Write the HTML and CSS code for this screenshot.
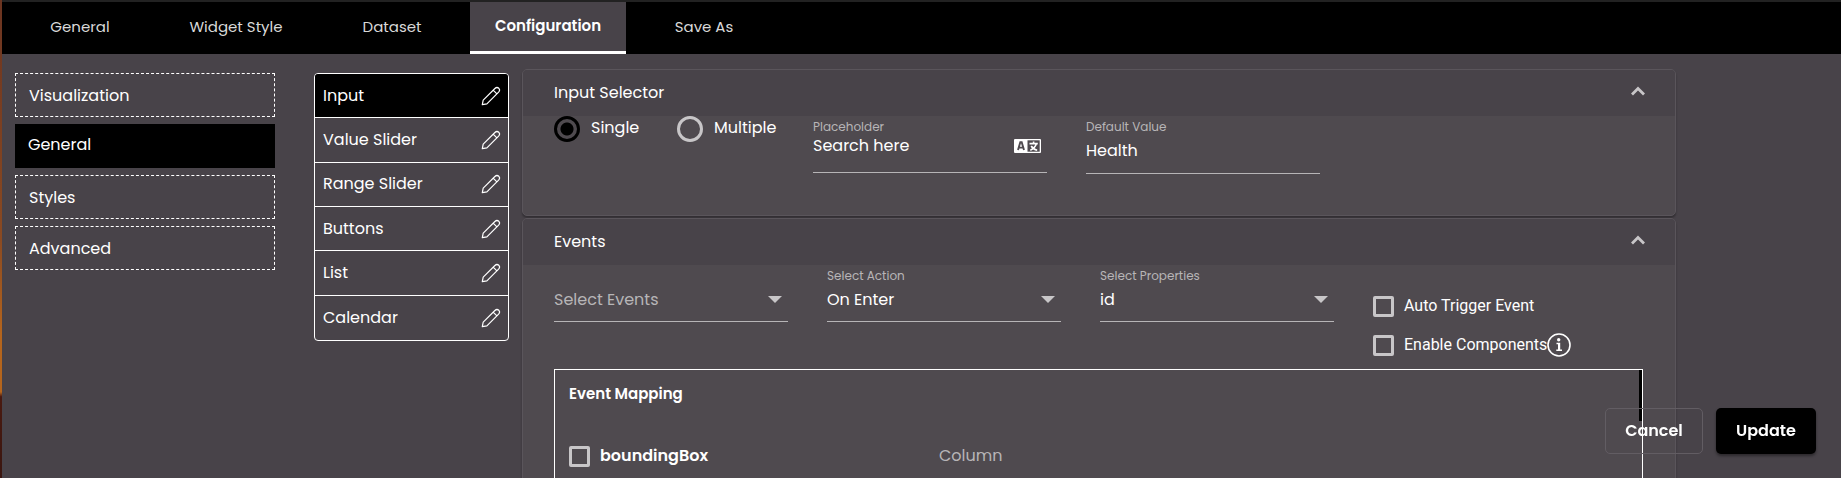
FILE: index.html
```
<!DOCTYPE html>
<html lang="en">
<head>
    <meta charset="UTF-8">
    <meta name="viewport" content="width=device-width, initial-scale=1.0">
    <title>Widget Configuration</title>
    <link rel="stylesheet" href="styles.css">
</head>
<body>
    <svg class="sprite" aria-hidden="true">
        <symbol id="pencil" viewBox="0 0 20 20">
            <path d="M1.3 18.7 2.2 14.2 13.9 2.5Q15.9.6 17.8 2.3 19.5 4.2 17.6 6.2L5.9 17.9ZM12.2 4.2 15.9 7.9" fill="none" stroke="currentColor" stroke-width="1.2" stroke-linejoin="round"/>
        </symbol>
        <symbol id="chevron" viewBox="0 0 16 10">
            <path d="M2 8.5 8 2.5 14 8.5" fill="none" stroke="currentColor" stroke-width="2.8"/>
        </symbol>
    </svg>

    <div class="window">
        <nav class="tabs">
            <a class="tab" href="#">General</a>
            <a class="tab" href="#">Widget Style</a>
            <a class="tab" href="#">Dataset</a>
            <a class="tab active" href="#">Configuration</a>
            <a class="tab" href="#">Save As</a>
        </nav>

        <div class="content">
            <div class="sections">
                <button type="button">Visualization</button>
                <button type="button" class="active">General</button>
                <button type="button">Styles</button>
                <button type="button">Advanced</button>
            </div>

            <div class="components">
                <button type="button" class="active">Input <svg><use href="#pencil"/></svg></button>
                <button type="button">Value Slider <svg><use href="#pencil"/></svg></button>
                <button type="button">Range Slider <svg><use href="#pencil"/></svg></button>
                <button type="button">Buttons <svg><use href="#pencil"/></svg></button>
                <button type="button">List <svg><use href="#pencil"/></svg></button>
                <button type="button">Calendar <svg><use href="#pencil"/></svg></button>
            </div>

            <main class="panels">
                <section class="panel">
                    <button type="button" class="panel-header">Input Selector <svg><use href="#chevron"/></svg></button>
                    <div class="panel-body selector-body">
                        <div class="radio-group">
                            <label class="radio"><input type="radio" name="mode" checked> Single</label>
                            <label class="radio"><input type="radio" name="mode"> Multiple</label>
                        </div>
                        <div class="field">
                            <label for="placeholder">Placeholder</label>
                            <div class="control with-icon">
                                <input type="text" id="placeholder" value="Search here">
                                <svg class="translate" viewBox="0 0 27 14">
                                    <rect width="27" height="14" rx="1" fill="#fff"/>
                                    <path d="M4 11 6.3 3.2H7.7L10 11M5 8.6H9" fill="none" stroke="#4f4a4f" stroke-width="1.9"/>
                                    <rect x="13.5" y="1.3" width="12.2" height="11.4" fill="#4f4a4f"/>
                                    <path d="M15.5 4.6H23.8M19.6 2.4V4.6M22.4 4.8Q20.8 9.4 16.3 11.2M17.2 7Q19.2 10.4 23.2 11.3" fill="none" stroke="#fff" stroke-width="1.6"/>
                                </svg>
                            </div>
                        </div>
                        <div class="field">
                            <label for="defaultValue">Default Value</label>
                            <div class="control roomy">
                                <input type="text" id="defaultValue" value="Health">
                            </div>
                        </div>
                    </div>
                </section>

                <section class="panel">
                    <button type="button" class="panel-header">Events <svg><use href="#chevron"/></svg></button>
                    <div class="panel-body">
                        <div class="events-row">
                            <div class="field">
                                <div class="control select muted">
                                    <select aria-label="Select Events"><option>Select Events</option></select>
                                </div>
                            </div>
                            <div class="field">
                                <label for="action">Select Action</label>
                                <div class="control select">
                                    <select id="action"><option>On Enter</option></select>
                                </div>
                            </div>
                            <div class="field">
                                <label for="properties">Select Properties</label>
                                <div class="control select">
                                    <select id="properties"><option>id</option></select>
                                </div>
                            </div>
                            <div class="checks">
                                <label class="check"><input type="checkbox"> Auto Trigger Event</label>
                                <div class="check-line">
                                    <label class="check"><input type="checkbox"> Enable Components</label>
                                    <svg class="info" viewBox="0 0 24 24">
                                        <circle cx="12" cy="12" r="11" fill="none" stroke="#fff" stroke-width="1.6"/>
                                        <circle cx="11.7" cy="6.7" r="1.7" fill="#fff"/>
                                        <path d="M9.5 9.8H13.2V16.6H15V18H9.3V16.6H11V11.2H9.5Z" fill="#fff"/>
                                    </svg>
                                </div>
                            </div>
                        </div>

                        <div class="mapping">
                            <h2>Event Mapping</h2>
                            <div class="mapping-row">
                                <label class="check strong"><input type="checkbox"> boundingBox</label>
                                <span class="column">Column</span>
                            </div>
                            <div class="scroll-thumb"></div>
                        </div>
                    </div>
                </section>
            </main>
        </div>

        <div class="actions">
            <button type="button" class="cancel">Cancel</button>
            <button type="button" class="update">Update</button>
        </div>
    </div>
</body>
</html>
```
FILE: styles.css
```
* {
    box-sizing: border-box;
}

body {
    margin: 0;
    padding-left: 2px;
    height: 100vh;
    overflow: hidden;
    background: linear-gradient(#6b3420 0%, #8a4a22 50%, #b5651d 70%, #b5651d 82%, #4a1a10 83%, #3a1610 100%);
    color: #fff;
    font-family: Poppins, Inter, sans-serif;
    font-size: 16px;
    line-height: 24px;
}

button, input, select {
    font: inherit;
    color: inherit;
}

button {
    background: none;
    border: none;
    padding: 0;
    text-align: left;
    cursor: pointer;
}

.sprite {
    display: none;
}

.window {
    height: 100%;
    overflow: hidden;
    background-color: #484349;
    border-top: 2px solid #222;
}

/* top tabs */
.tabs {
    display: flex;
    height: 52px;
    background-color: #000;
}

.tab {
    display: flex;
    align-items: center;
    justify-content: center;
    width: 156px;
    padding-bottom: 3px;
    color: #d9d9d9;
    font-size: 15px;
    text-decoration: none;
}

.tab.active {
    padding-bottom: 2px;
    background-color: #484349;
    border-bottom: 3px solid #fff;
    color: #fff;
    font-weight: 600;
}

.content {
    display: flex;
    align-items: flex-start;
    padding: 15px 165px 0 13px;
}

/* left column */
.sections {
    display: flex;
    flex-direction: column;
    flex: none;
    gap: 7px;
    width: 260px;
    margin: 4px 39px 0 0;
}

.sections button {
    height: 44px;
    padding: 1px 13px 0;
    border: 1px dashed #fff;
}

.sections .active {
    padding: 0 13px 2px;
    background-color: #000;
    border: none;
}

.components {
    display: grid;
    grid-auto-rows: 1fr;
    flex: none;
    width: 195px;
    height: 268px;
    margin: 4px 13px 0 0;
    border: 1px solid #fff;
    border-radius: 4px;
    overflow: hidden;
}

.components button {
    display: flex;
    align-items: center;
    justify-content: space-between;
    padding: 0 7px 0 8px;
    border-bottom: 1px solid #fff;
}

.components button:last-child {
    border-bottom: none;
}

.components .active {
    background-color: #000;
}

.components svg {
    width: 20px;
    height: 20px;
}

/* accordion panels */
.panels {
    display: flex;
    flex-direction: column;
    flex: 1;
    gap: 2px;
}

.panel {
    border: 1px solid #5a555b;
    border-radius: 5px;
    background-color: #4f4a4f;
    box-shadow: 0 2px 2px rgba(0, 0, 0, 0.3);
    overflow: hidden;
}

.panel-header {
    display: flex;
    align-items: center;
    justify-content: space-between;
    width: 100%;
    height: 46px;
    padding: 0 29px 0 31px;
    background-color: #484349;
}

.panel-header svg {
    width: 16px;
    height: 10px;
    margin-bottom: 4px;
    color: #c8c6c8;
}

.panel-body {
    padding: 0 32px 0 31px;
}

.selector-body {
    display: flex;
    gap: 39px;
    height: 99px;
}

.radio-group {
    display: flex;
    align-items: flex-start;
    width: 220px;
}

.radio {
    display: flex;
    align-items: flex-start;
    gap: 11px;
    width: 123px;
    flex: none;
}

.radio input {
    appearance: none;
    width: 26px;
    height: 26px;
    margin: 0;
    border: 3px solid #c8c6c8;
    border-radius: 50%;
}

.radio input:checked {
    border-color: #000;
    background: radial-gradient(circle, #000 6px, transparent 7px);
}

.field {
    display: flex;
    flex-direction: column;
    width: 234px;
}

.field label {
    height: 20px;
    color: #b7b5b7;
    font-size: 12px;
    line-height: 20px;
}

.control {
    display: flex;
    align-items: center;
    height: 39px;
    border-bottom: 1px solid #b7b5b7;
}

.control input,
.control select {
    flex: 1;
    min-width: 0;
    width: 100%;
    height: 24px;
    padding: 0;
    border: none;
    outline: none;
    background: none;
    appearance: none;
}

.selector-body .field {
    padding-top: 1px;
}

.with-icon {
    height: 36px;
    padding: 0 6px 18px 0;
}

.roomy {
    height: 37px;
    padding-bottom: 9px;
}

.translate {
    width: 27px;
    height: 14px;
}

.events-row {
    display: flex;
    gap: 39px;
    height: 104px;
}

.events-row .field {
    justify-content: flex-end;
    height: 57px;
}

.events-row .control {
    flex: none;
    padding-bottom: 5px;
}

.events-row .field label {
    height: 17px;
}

.select::after {
    content: "";
    margin-right: 6px;
    border: 7px solid transparent;
    border-top-color: #c8c6c8;
    border-bottom: none;
}

.muted {
    color: #b7b5b7;
}

.checks {
    display: flex;
    flex-direction: column;
    gap: 15px;
    padding-top: 29px;
    font-family: Roboto, sans-serif;
}

.check-line {
    display: flex;
    align-items: center;
}

.check {
    display: flex;
    align-items: center;
    gap: 10px;
}

.check input {
    appearance: none;
    width: 21px;
    height: 21px;
    margin: 0;
    border: 3px solid #c8c6c8;
    border-radius: 2px;
}

.info {
    width: 24px;
    height: 24px;
}

/* event mapping box */
.mapping {
    position: relative;
    height: 240px;
    padding: 12px 14px;
    border: 1px solid #fff;
}

.mapping h2 {
    margin: 0 0 38px;
    font-size: 15px;
    font-weight: 600;
    line-height: 24px;
}

.mapping-row {
    display: flex;
    align-items: center;
}

.strong {
    width: 370px;
    font-weight: 600;
}

.column {
    color: #b7b5b7;
}

.scroll-thumb {
    position: absolute;
    top: 0;
    right: 0;
    width: 3px;
    height: 51px;
    background-color: #000;
}

/* floating buttons */
.actions {
    position: fixed;
    right: 25px;
    bottom: 24px;
    display: flex;
    gap: 13px;
}

.actions button {
    height: 46px;
    border-radius: 5px;
    font-weight: 600;
    text-align: center;
}

.cancel {
    width: 98px;
    border: 1px solid #625d63;
}

.actions .update {
    width: 100px;
    background-color: #000;
    box-shadow: 0 2px 3px rgba(0, 0, 0, 0.4);
}
```
